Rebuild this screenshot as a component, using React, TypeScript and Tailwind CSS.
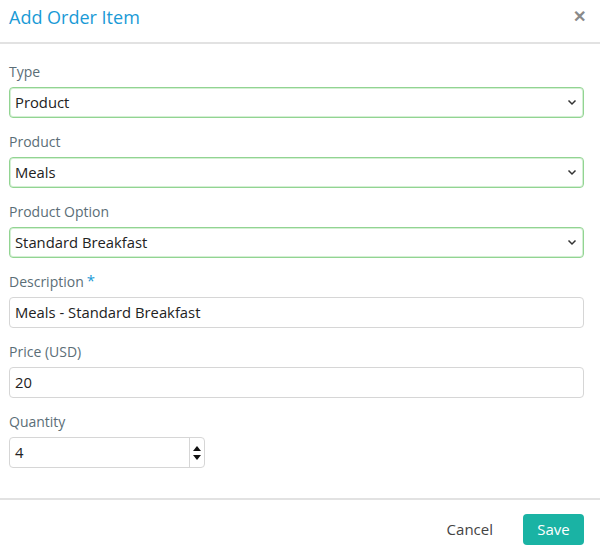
import React from "react";

const font = { fontFamily: '"Open Sans", "Liberation Sans", sans-serif' };

function Chevron() {
  return (
    <svg width="10" height="7" viewBox="0 0 10 7" className="shrink-0">
      <path d="M1.5 1.5 L5 5 L8.5 1.5" fill="none" stroke="#333" strokeWidth="1.5" />
    </svg>
  );
}

function Label({ children }: { children: React.ReactNode }) {
  return <div className="h-[20px] text-[14px] leading-[20px] text-[#5b6e77] mb-[5px] flex overflow-visible">{children}</div>;
}

function SelectField({ label, value }: { label: string; value: string }) {
  return (
    <div className="flex flex-col">
      <Label>{label}</Label>
      <div className="h-[31px] border border-[#92d492] shadow-[inset_0_0_0_1px_rgba(170,225,170,0.5)] rounded-[4px] flex items-center justify-between pl-[5px] pr-[6px] text-[14.8px] text-[#222]">
        <span>{value}</span>
        <Chevron />
      </div>
    </div>
  );
}

function InputField({ label, value, required }: { label: string; value: string; required?: boolean }) {
  return (
    <div className="flex flex-col">
      <Label>
        {label}
        {required && <span className="text-[#1a9ad6] text-[15px] leading-[16px] ml-[3px]">*</span>}
      </Label>
      <div className="h-[31px] border border-[#d6d6d6] rounded-[4px] flex items-center pl-[5px] text-[14.8px] text-[#222]">
        {value}
      </div>
    </div>
  );
}

export default function App() {
  return (
    <div className="w-[600px] h-[550px] bg-white overflow-hidden flex flex-col" style={font}>
      <div className="h-[44px] border-b-2 border-[#e2e2e2] flex items-center justify-between pl-[9px] pr-[14px] shrink-0">
        <div className="text-[18px] text-[#1a9ad6] leading-none -mt-[8px]">Add Order Item</div>
        <div className="text-[#8a8a8a] text-[16px] font-bold leading-none -mt-[10px]">✕</div>
      </div>
      <div className="flex flex-col gap-[14px] pl-[9px] pr-[16px] pt-[18px] h-[454px] shrink-0">
        <SelectField label="Type" value="Product" />
        <SelectField label="Product" value="Meals" />
        <SelectField label="Product Option" value="Standard Breakfast" />
        <InputField label="Description" value="Meals - Standard Breakfast" required />
        <InputField label="Price (USD)" value="20" />
        <div className="flex flex-col">
          <Label>Quantity</Label>
          <div className="w-[196px] h-[31px] border border-[#d6d6d6] rounded-[4px] flex items-center text-[14.8px] text-[#222]">
            <span className="flex-1 pl-[5px]">4</span>
            <div className="w-[15px] h-full border-l border-[#d6d6d6] flex flex-col items-center justify-center gap-[4px]">
              <svg width="8" height="5" viewBox="0 0 8 5"><path d="M0 5 L4 0 L8 5 Z" fill="#111" /></svg>
              <svg width="8" height="5" viewBox="0 0 8 5"><path d="M0 0 L4 5 L8 0 Z" fill="#111" /></svg>
            </div>
          </div>
        </div>
      </div>
      <div className="border-t-2 border-[#e2e2e2] flex items-center justify-end gap-[20px] pr-[16px] pt-[14px]">
        <div className="text-[15px] text-[#444] px-[10px]">Cancel</div>
        <div className="h-[31px] w-[61px] rounded-[4px] bg-[#1ab3a4] text-white text-[15px] flex items-center justify-center">Save</div>
      </div>
    </div>
  );
}
